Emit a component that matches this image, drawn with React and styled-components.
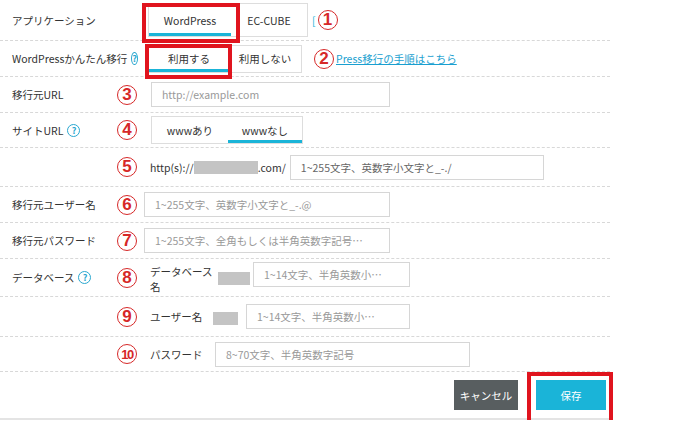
import React from 'react';
import styled, { createGlobalStyle } from 'styled-components';

const Global = createGlobalStyle`
  body { margin: 0; background: #fff; font-family: "Noto Sans CJK JP", "Noto Sans", sans-serif; }
`;

const Page = styled.div`
  width: 610px;
  position: relative;
  border-bottom: 2px solid #e4e4e4;
  height: 418px;
`;

const Row = styled.div`
  display: flex;
  align-items: center;
  height: ${p => p.h}px;
  border-bottom: 1px dashed #d8d8d8;
  box-sizing: border-box;
`;

const Label = styled.div`
  width: 112px;
  padding-left: 12px;
  box-sizing: border-box;
  font-size: 10.5px;
  color: #333;
  display: flex;
  align-items: center;
  gap: 4px;
  white-space: nowrap;
`;

const Help = styled.span`
  width: 11px;
  height: 11px;
  border: 1.3px solid #2aa7cf;
  border-radius: 50%;
  color: #2aa7cf;
  font-size: 9px;
  font-weight: bold;
  display: inline-flex;
  align-items: center;
  justify-content: center;
  line-height: 1;
`;

const NumCol = styled.div`
  width: 30px;
  display: flex;
  justify-content: center;
`;

const Circle = styled.span`
  width: 20px;
  height: 20px;
  border: 1.3px solid #d62828;
  border-radius: 50%;
  color: #d62828;
  font-family: "Liberation Sans", sans-serif;
  font-weight: bold;
  font-size: ${p => (p.small ? 13 : 17)}px;
  letter-spacing: ${p => (p.small ? -1.5 : 0)}px;
  display: inline-flex;
  align-items: center;
  justify-content: center;
  box-sizing: border-box;
`;

const Content = styled.div`
  display: flex;
  align-items: center;
  margin-left: ${p => p.ml || 8}px;
  font-size: 10.5px;
  color: #333;
`;

const Tabs = styled.div`
  display: flex;
  border: 1px solid #ddd;
  height: ${p => p.h}px;
  box-sizing: border-box;
`;

const Tab = styled.div`
  width: ${p => p.w}px;
  display: flex;
  align-items: center;
  justify-content: center;
  font-size: 10.5px;
  color: #333;
  box-sizing: border-box;
  border-bottom: 3px solid ${p => (p.active ? '#1ab4d8' : 'transparent')};
  padding-top: 3px;
`;

const Input = styled.div`
  width: ${p => p.w}px;
  height: 25px;
  border: 1px solid #d6d6d6;
  box-sizing: border-box;
  padding-left: 10px;
  display: flex;
  align-items: center;
  font-size: 10.5px;
  color: #999;
  white-space: nowrap;
  overflow: hidden;
`;

const Mask = styled.span`
  display: inline-block;
  width: ${p => p.w}px;
  height: 13px;
  background: #c4c4c4;
  margin-top: ${p => p.mt || 0}px;
`;

const Fixed = styled.span`
  width: ${p => p.w}px;
  margin-top: ${p => p.mt || 0}px;
  flex-shrink: 0;
`;

const Link = styled.a`
  color: #1a9fd0;
  text-decoration: underline;
  font-size: 10.5px;
  margin-left: 2px;
`;

const RedBox = styled.div`
  position: absolute;
  left: ${p => p.x}px;
  top: ${p => p.y}px;
  width: ${p => p.w}px;
  height: ${p => p.h}px;
  border: 4px solid #e0141e;
  box-sizing: border-box;
  pointer-events: none;
`;

const Footer = styled.div`
  display: flex;
  justify-content: flex-end;
  gap: 18px;
  padding: 8px 4px 0 0;
`;

const Button = styled.div`
  width: ${p => p.w}px;
  height: 30px;
  background: ${p => p.bg};
  color: #fff;
  font-size: 10.5px;
  display: flex;
  align-items: center;
  justify-content: center;
`;

export default function App() {
  return (
    <>
      <Global />
      <Page>
        <Row h={41}>
          <Label>アプリケーション</Label>
          <NumCol />
          <Content ml={6}>
            <Tabs h={34}>
              <Tab w={82} active>WordPress</Tab>
              <Tab w={76}>EC-CUBE</Tab>
            </Tabs>
            <span style={{ color: '#1ab4d8', margin: '0 2px 0 4px' }}>[</span>
            <Circle>1</Circle>
          </Content>
        </Row>
        <Row h={36}>
          <Label>WordPressかんたん移行 <Help>?</Help></Label>
          <NumCol />
          <Content ml={6}>
            <Tabs h={28}>
              <Tab w={80} active>利用する</Tab>
              <Tab w={72}>利用しない</Tab>
            </Tabs>
            <Fixed w={12} />
            <Circle>2</Circle>
            <Link>Press移行の手順はこちら</Link>
          </Content>
        </Row>
        <Row h={36}>
          <Label>移行元URL</Label>
          <NumCol><Circle>3</Circle></NumCol>
          <Content ml={9}><Input w={239}>http://example.com</Input></Content>
        </Row>
        <Row h={35}>
          <Label>サイトURL <Help>?</Help></Label>
          <NumCol><Circle>4</Circle></NumCol>
          <Content ml={9}>
            <Tabs h={28}>
              <Tab w={76}>wwwあり</Tab>
              <Tab w={74} active>wwwなし</Tab>
            </Tabs>
          </Content>
        </Row>
        <Row h={39}>
          <Label />
          <NumCol><Circle>5</Circle></NumCol>
          <Content ml={8}>
            http(s)://<Mask w={64} />.com/
            <Fixed w={4} />
            <Input w={254} style={{ color: '#666' }}>1~255文字、英数字小文字と_-./</Input>
          </Content>
        </Row>
        <Row h={36}>
          <Label>移行元ユーザー名</Label>
          <NumCol><Circle>6</Circle></NumCol>
          <Content ml={2}><Input w={246}>1~255文字、英数字小文字と_-.@</Input></Content>
        </Row>
        <Row h={36}>
          <Label>移行元パスワード</Label>
          <NumCol><Circle>7</Circle></NumCol>
          <Content ml={2}><Input w={246}>1~255文字、全角もしくは半角英数字記号…</Input></Content>
        </Row>
        <Row h={38}>
          <Label>データベース <Help>?</Help></Label>
          <NumCol><Circle>8</Circle></NumCol>
          <Content ml={8} style={{ alignItems: 'flex-start' }}>
            <Fixed w={68} mt={2}>データベース名</Fixed>
            <Mask w={32} mt={10} />
            <Input w={157} style={{ marginLeft: 3 }}>1~14文字、半角英数小…</Input>
          </Content>
        </Row>
        <Row h={40}>
          <Label />
          <NumCol><Circle>9</Circle></NumCol>
          <Content ml={8}>
            <Fixed w={63}>ユーザー名</Fixed>
            <Mask w={25} mt={4} />
            <Input w={164} style={{ marginLeft: 8 }}>1~14文字、半角英数小…</Input>
          </Content>
        </Row>
        <Row h={35}>
          <Label />
          <NumCol><Circle small>10</Circle></NumCol>
          <Content ml={8}>
            <Fixed w={65}>パスワード</Fixed>
            <Input w={255}>8~70文字、半角英数字記号</Input>
          </Content>
        </Row>
        <Footer>
          <Button w={64} bg="#585e60">キャンセル</Button>
          <Button w={70} bg="#1ab4d8">保存</Button>
        </Footer>
        <RedBox x={142} y={3} w={98} h={40} />
        <RedBox x={145} y={44} w={87} h={35} />
        <RedBox x={527} y={372} w={86} h={60} />
      </Page>
    </>
  );
}
